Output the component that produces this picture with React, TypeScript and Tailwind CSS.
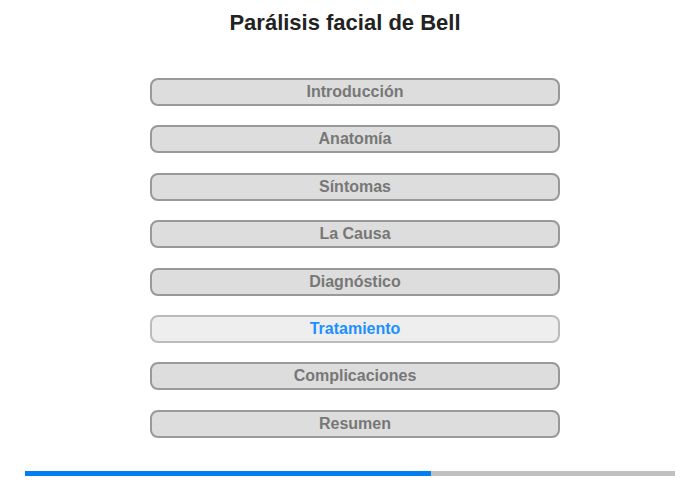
import React from 'react';

const sections = [
  'Introducción',
  'Anatomía',
  'Síntomas',
  'La Causa',
  'Diagnóstico',
  'Tratamiento',
  'Complicaciones',
  'Resumen',
];

const App: React.FC = () => {
  const active = 'Tratamiento';

  return (
    <div className="w-[700px] h-[480px] bg-white flex flex-col font-['Liberation_Sans',Arial,sans-serif]">
      <h1 className="mt-[10px] pr-[10px] h-[26px] leading-[26px] text-center text-[22px] font-bold text-[#222]">
        Parálisis facial de Bell
      </h1>

      <ul className="mt-[42px] ml-[150px] flex flex-col gap-[19.4px]">
        {sections.map((label) => {
          const isActive = label === active;
          return (
            <li key={label}>
              <button
                className={`w-[410px] h-[28px] rounded-[8px] border-2 text-[16px] font-bold leading-none flex items-center justify-center ${
                  isActive
                    ? 'bg-[#eeeeee] border-[#bbbbbb] text-[#1e90ff]'
                    : 'bg-[#dddddd] border-[#999999] text-[#777777]'
                }`}
              >
                {label}
              </button>
            </li>
          );
        })}
      </ul>

      <div className="mt-auto mb-[4px] ml-[25px] w-[650px] h-[5px] flex">
        <div className="w-[406px] bg-[#0080f0]" />
        <div className="flex-1 bg-[#c0c0c0]" />
      </div>
    </div>
  );
};

export default App;
